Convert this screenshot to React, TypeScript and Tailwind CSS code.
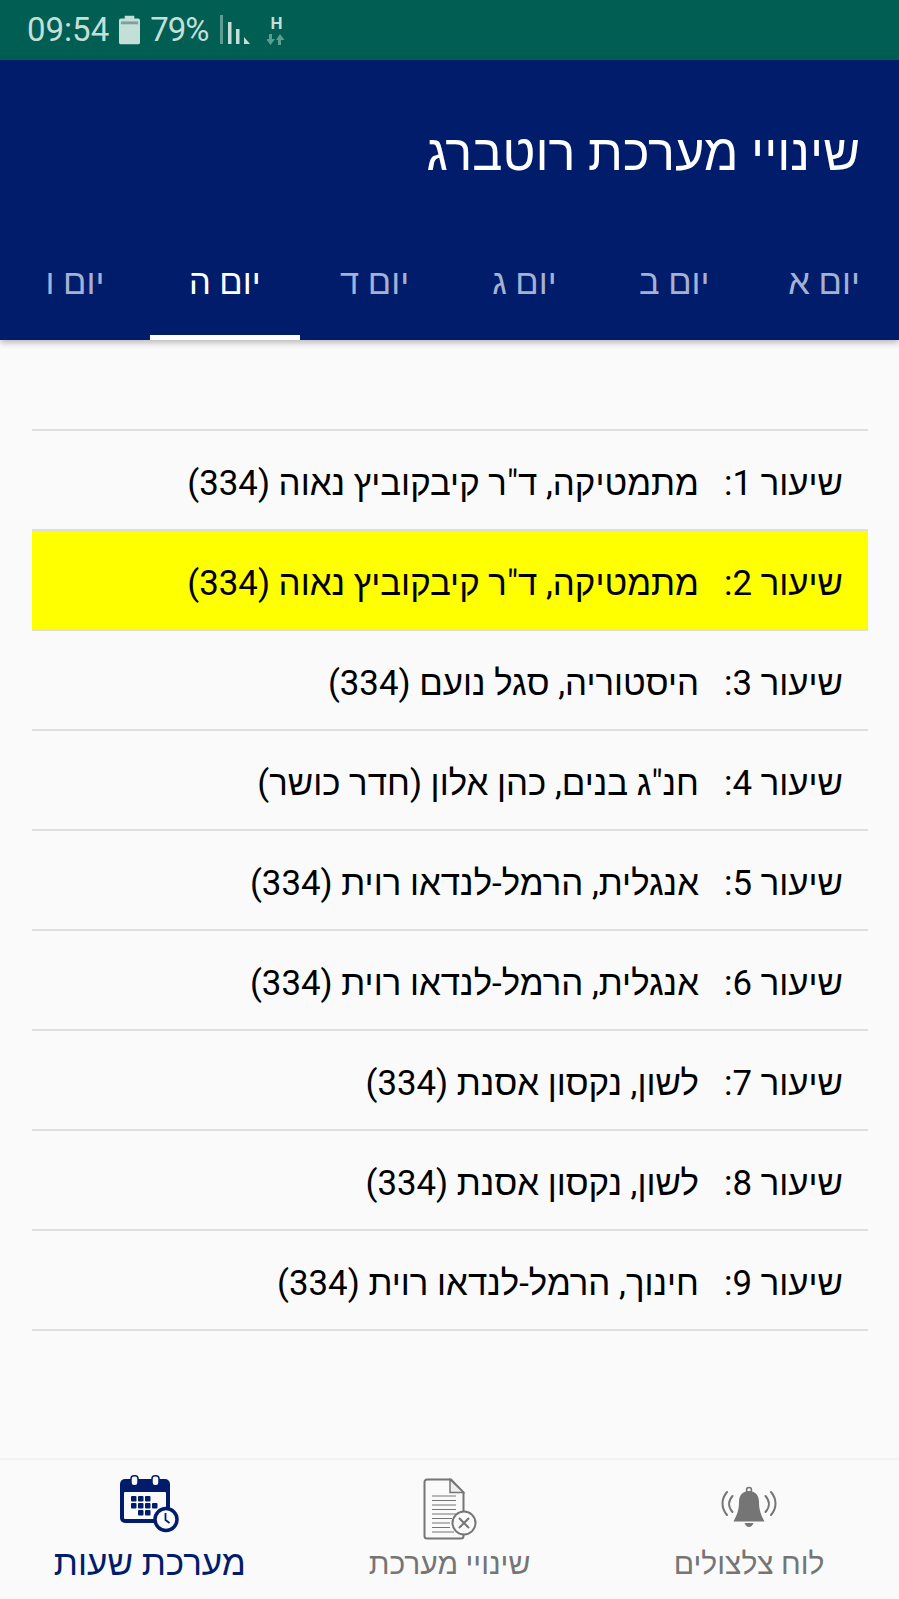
const days = ["יום א", "יום ב", "יום ג", "יום ד", "יום ה", "יום ו"];
const activeDay = 4;
const highlightedLesson = 2;

const lessons = [
  "מתמטיקה, ד\"ר קיבקוביץ נאוה (334)",
  "מתמטיקה, ד\"ר קיבקוביץ נאוה (334)",
  "היסטוריה, סגל נועם (334)",
  "חנ\"ג בנים, כהן אלון (חדר כושר)",
  "אנגלית, הרמל-לנדאו רוית (334)",
  "אנגלית, הרמל-לנדאו רוית (334)",
  "לשון, נקסון אסנת (334)",
  "לשון, נקסון אסנת (334)",
  "חינוך, הרמל-לנדאו רוית (334)",
];

function BellIcon() {
  return (
    <svg width="56" height="44" viewBox="0 0 56 44" fill="none" stroke="#757575">
      <circle cx="28" cy="4" r="2.500" strokeWidth="1.500" />
      <path d="M28 5c7 0 10 5 10 11 0 8 2 13 5.500 19.500h-31C16 29 18 24 18 16c0-6 3-11 10-11z" fill="#757575" stroke="none" />
      <path d="M23.500 37h9c-1 2.500-2.500 4-4.500 4s-3.500-1.500-4.500-4z" fill="#757575" stroke="none" />
      <path d="M6 6c-6 7-6 16 0 23M11.500 10c-4.500 5-4.500 11 0 16M50 6c6 7 6 16 0 23M44.500 10c4.500 5 4.500 11 0 16" strokeWidth="2" strokeLinecap="round" />
    </svg>
  );
}

function DocIcon() {
  return (
    <svg width="56" height="62" viewBox="0 0 56 62" fill="none" stroke="#757575">
      <path d="M29 1.500H5a2.500 2.500 0 0 0-2.500 2.500v54A2.500 2.500 0 0 0 5 60.500h34a2.500 2.500 0 0 0 2.500-2.500V14.500z" fill="#fafafa" strokeWidth="2" />
      <path d="M28 1.500v13h13.500z" fill="#eeeeee" strokeWidth="1.500" />
      <path d="M10 18h24M10 22.500h24M10 27h24M10 31.500h24M10 36h24M10 40.500h20M10 45h18M10 49.500h18M10 54h22" strokeWidth="1" />
      <circle cx="42" cy="45" r="11.500" fill="#fafafa" strokeWidth="2" />
      <path d="M37 40l10 10M47 40l-10 10" strokeWidth="2" />
    </svg>
  );
}

function CalendarIcon() {
  return (
    <svg width="60" height="58" viewBox="0 0 60 58" fill="none">
      <rect x="0" y="4" width="50" height="44" rx="5" fill="#001c6b" />
      <rect x="4" y="17" width="42" height="27" rx="1" fill="#fafafa" />
      <rect x="11" y="0.750" width="7" height="10" rx="3" fill="#fafafa" stroke="#001c6b" strokeWidth="1.500" />
      <rect x="32" y="0.750" width="7" height="10" rx="3" fill="#fafafa" stroke="#001c6b" strokeWidth="1.500" />
      <g fill="#001c6b">
        <rect x="11" y="21" width="5.500" height="5.500" rx="1" />
        <rect x="18" y="21" width="5.500" height="5.500" rx="1" />
        <rect x="25" y="21" width="5.500" height="5.500" rx="1" />
        <rect x="11" y="28" width="5.500" height="5.500" rx="1" />
        <rect x="18" y="28" width="5.500" height="5.500" rx="1" />
        <rect x="25" y="28" width="5.500" height="5.500" rx="1" />
        <rect x="32" y="28" width="5.500" height="5.500" rx="1" />
        <rect x="18" y="35" width="5.500" height="5.500" rx="1" />
        <rect x="25" y="35" width="5.500" height="5.500" rx="1" />
      </g>
      <circle cx="46" cy="44.500" r="11" fill="#fafafa" stroke="#001c6b" strokeWidth="3.500" />
      <path d="M45.500 38v7l4 3" stroke="#001c6b" strokeWidth="1.800" />
    </svg>
  );
}

function StatusBar() {
  return (
    <div className="h-[60px] bg-[#005f52] flex items-center pl-[27px] text-[#c4ded8]">
      <span className="text-[33px]">09:54</span>
      <svg width="21" height="30" viewBox="0 0 22 30" className="ml-[10px]">
        <path d="M6 0h10v3h4a2 2 0 0 1 2 2v23a2 2 0 0 1-2 2H2a2 2 0 0 1-2-2V5a2 2 0 0 1 2-2h4z" fill="#c4ded8" />
        <rect x="2" y="6" width="18" height="3" fill="#7ba39c" />
      </svg>
      <span className="text-[33px] tracking-[-1px] ml-[10px]">79%</span>
      <svg width="32" height="30" viewBox="0 0 32 30" className="ml-[12px]">
        <rect x="0" y="0" width="3" height="29" fill="#5f9c92" />
        <rect x="8" y="7" width="3.500" height="22" fill="#c4ded8" />
        <rect x="16" y="14" width="3.500" height="15" fill="#c4ded8" />
        <path d="M24 22l6 7h-6z" fill="#c4ded8" />
      </svg>
      <div className="ml-[15px] flex flex-col items-center leading-none">
        <span className="text-[17px] font-bold h-[16px]">H</span>
        <svg width="18" height="11" viewBox="0 0 18 11" className="mt-[3px]">
          <path d="M2 0h3v5h3l-4.500 6L-1 5h3zM11 11h3V6h3.500L13 0 9 6h2z" fill="#5f9c92" />
        </svg>
      </div>
    </div>
  );
}

function NavItem({ label, active, iconClass, children }: { label: string; active?: boolean; iconClass: string; children: React.ReactNode }) {
  return (
    <div className="flex-1 flex flex-col items-center">
      <div className={iconClass}>{children}</div>
      <span className={active ? "text-[35px] leading-[44px] font-medium text-[#001c6b]" : "text-[30px] leading-[44px] text-[#757575]"}>
        {label}
      </span>
    </div>
  );
}

export default function App() {
  return (
    <div
      className="w-[899px] h-[1599px] flex flex-col bg-[#fafafa] overflow-hidden"
      style={{ fontFamily: 'Roboto, "Liberation Sans", sans-serif' }}
    >
      <StatusBar />

      <header className="bg-[#001c6b] shadow-[0_3px_6px_rgba(0,0,0,0.25)] z-10" dir="rtl">
        <h1 className="h-[180px] pr-[39px] pt-[6px] flex items-center text-white text-[50.5px]">שינויי מערכת רוטברג</h1>
        <div className="flex h-[100px]">
          {days.map((day, i) => (
            <div
              key={day}
              className={
                i === activeDay
                  ? "flex-1 text-center text-[34.5px] font-medium pt-[17px] text-white border-b-[5px] border-white"
                  : "flex-1 text-center text-[34.5px] font-medium pt-[17px] text-[#a5b1d2]"
              }
            >
              {day}
            </div>
          ))}
        </div>
      </header>

      <main className="flex-1 pt-[89px] pl-[32px] pr-[31px]" dir="rtl">
        <ul className="border-t-2 border-[#dedede]">
          {lessons.map((subject, i) => (
            <li
              key={i}
              className={
                i + 1 === highlightedLesson
                  ? "h-[100px] flex items-center border-b-2 border-[#dedede] pr-[25px] pt-[7px] text-[34.8px] text-black bg-[#ffff00]"
                  : "h-[100px] flex items-center border-b-2 border-[#dedede] pr-[25px] pt-[7px] text-[34.8px] text-black"
              }
            >
              <span className="w-[144px]">שיעור {i + 1}:</span>
              <span>{subject}</span>
            </li>
          ))}
        </ul>
      </main>

      <nav className="h-[141px] flex border-t-2 border-[#f2f2f2]">
        <NavItem label="מערכת שעות" active iconClass="h-[82px] pt-[15px]">
          <CalendarIcon />
        </NavItem>
        <NavItem label="שינויי מערכת" iconClass="h-[82px] pt-[18px]">
          <DocIcon />
        </NavItem>
        <NavItem label="לוח צלצולים" iconClass="h-[82px] pt-[26px]">
          <BellIcon />
        </NavItem>
      </nav>
    </div>
  );
}
